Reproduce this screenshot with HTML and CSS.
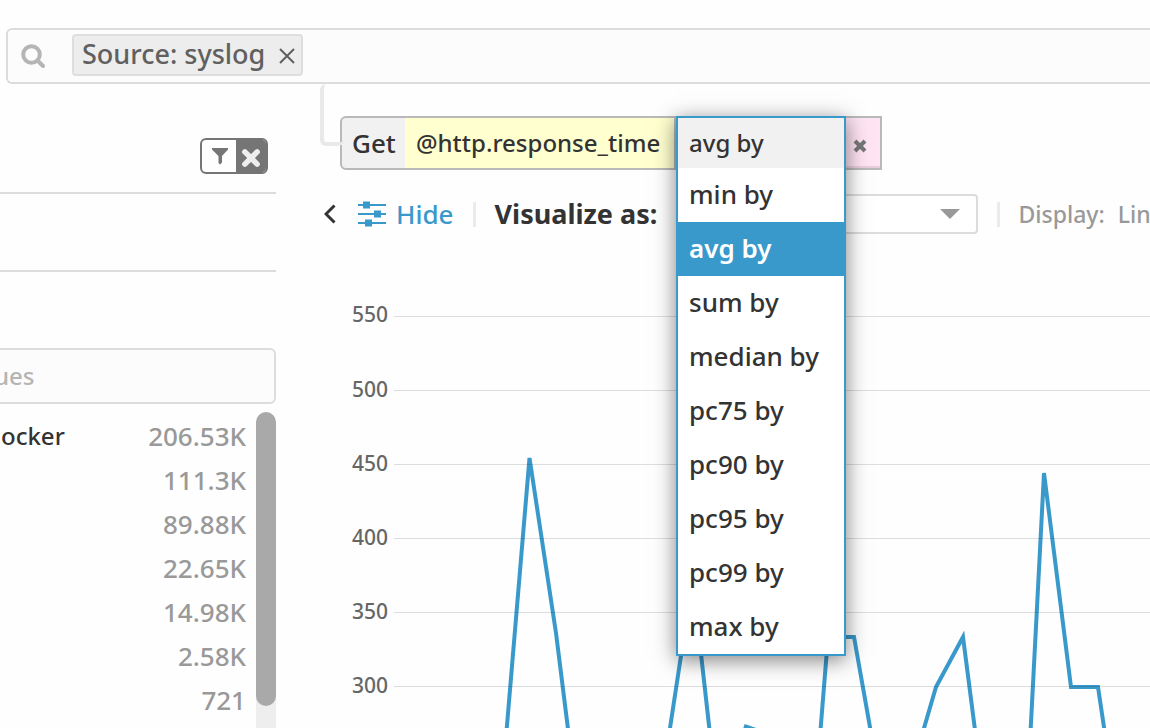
FILE: index.html
```html
<!DOCTYPE html>
<html lang="en">
<head>
<meta charset="utf-8">
<title>Log analytics</title>
<link rel="stylesheet" href="styles.css">
</head>
<body>
<div class="page">
  <header class="search">
    <svg class="search-icon" viewBox="0 0 24 24" aria-hidden="true"><circle cx="10.500" cy="10.500" r="8.300"/><path d="M16.500 16.500L22 22"/></svg>
    <div class="tag"><span>Source: syslog</span>
      <button class="tag-close" aria-label="Remove filter"><svg viewBox="0 0 16 16"><path d="M1 1L15 15M15 1L1 15"/></svg></button>
    </div>
    <input class="search-input" type="text" aria-label="Search logs">
  </header>
  <div class="columns">
    <aside class="sidebar">
      <div class="facet-head">
        <div class="toggle">
          <button class="toggle-filter" aria-label="Filter"><svg viewBox="0 0 18 18"><path d="M1 1H17V2.500L11 9V15.500L9 17.500L7.500 16V9L1 2.500Z"/></svg></button>
          <button class="toggle-clear" aria-label="Clear"><svg viewBox="0 0 18 18"><path d="M3.500 3.500L14.500 14.500M14.500 3.500L3.500 14.500"/></svg></button>
        </div>
      </div>
      <div class="facet-gap"></div>
      <input class="facet-search" type="text" placeholder="ues" aria-label="Filter values">
      <div class="facet-body">
        <ul class="values">
          <li><span class="name">ocker</span><span>206.53K</span></li>
          <li><span>111.3K</span></li>
          <li><span>89.88K</span></li>
          <li><span>22.65K</span></li>
          <li><span>14.98K</span></li>
          <li><span>2.58K</span></li>
          <li><span>721</span></li>
        </ul>
        <div class="scroll"><div class="thumb"></div></div>
      </div>
    </aside>
    <main class="main">
      <div class="query">
        <span class="get">Get</span>
        <button class="measure">@http.response_time</button>
        <div class="agg">
          <div class="menu">
            <button class="menu-head" aria-expanded="true">avg by</button>
            <ul class="options" role="listbox" aria-label="Aggregation">
              <li role="option">min by</li>
              <li role="option" class="selected" aria-selected="true">avg by</li>
              <li role="option">sum by</li>
              <li role="option">median by</li>
              <li role="option">pc75 by</li>
              <li role="option">pc90 by</li>
              <li role="option">pc95 by</li>
              <li role="option">pc99 by</li>
              <li role="option">max by</li>
            </ul>
          </div>
        </div>
        <button class="group" aria-label="Remove grouping"><svg viewBox="0 0 14 14"><path d="M2 2L12 12M12 2L2 12"/></svg></button>
      </div>
      <div class="toolbar">
        <button class="back" aria-label="Collapse"><svg viewBox="0 0 12 20"><path d="M10.500 1.500L2 10L10.500 18.500"/></svg></button>
        <button class="hide">
          <svg viewBox="0 0 28 26"><path class="rail" d="M0 4H28M0 13H28M0 22H28"/><path d="M5 .5h7v7h-7zM16 9.500h7v7h-7zM7 18.500h7v7h-7z"/></svg>
          <span>Hide</span>
        </button>
        <span class="divider"></span>
        <label class="visualize" for="viz">Visualize as:</label>
        <div class="select"><select id="viz"><option></option></select>
          <svg viewBox="0 0 20 10" aria-hidden="true"><path d="M0 0H20L10 10Z"/></svg></div>
        <span class="divider"></span>
        <span class="display">Display:</span><span class="display">Lin</span>
      </div>
      <svg class="chart" role="img" aria-label="Average response time">
        <g class="line"><path d="M184 487L209.500 184L236 359L252 487M345 487L364 362H379L393 487M424 452L436 456M498 487L508 363H534L556 487M602 461L616 413L643 363L659 487M709 487L724 199L751 413H778L788 480"/></g>
        <g class="grid"><path d="M74 42H2000M74 116H2000M74 190H2000M74 264H2000M74 338H2000M74 412H2000"/></g>
        <g class="ticks"><text x="68" y="48">550</text><text x="68" y="123">500</text><text x="68" y="197">450</text><text x="68" y="271">400</text><text x="68" y="345">350</text><text x="68" y="419">300</text></g>
      </svg>
    </main>
  </div>
</div>
</body>
</html>
```
FILE: styles.css
```css
* { box-sizing: border-box; }
html, body { height: 100%; }
body { margin: 0; overflow: hidden; background: #fefefe; color: #333; font: 500 26px/32px "Noto Sans", sans-serif; }
button, input, select { font: inherit; color: inherit; margin: 0; padding: 0; border: 0; background: none; border-radius: 0; }
button { cursor: pointer; }
ul { list-style: none; margin: 0; padding: 0; }
svg { display: block; flex: none; }

.page { display: flex; flex-direction: column; height: 100%; padding-top: 28px; }
.search { display: flex; align-items: center; flex: none; height: 56px; margin-left: 6px; padding-left: 13px; border: 2px solid #dcdcdc; border-right: 0; border-radius: 6px 0 0 6px; background: #fcfcfc; }
.search-icon { width: 24px; height: 24px; fill: none; stroke: #b5b5b5; stroke-width: 4; stroke-linecap: round; }
.tag { display: flex; align-items: center; gap: 14px; height: 42px; margin: 0 0 2px 27px; padding: 0 6px 2px 8px; border: 2px solid #dedede; border-radius: 4px; background: #ededed; color: #606060; font-size: 27px; white-space: nowrap; }
.tag-close svg { width: 16px; height: 16px; margin-top: 4px; fill: none; stroke: #606060; stroke-width: 2; }
.search-input { flex: 1; min-width: 0; height: 48px; }

.columns { display: flex; flex: 1; min-height: 0; }
.sidebar { display: flex; flex-direction: column; flex: none; width: 276px; color: #999; font-size: 24px; }
.facet-head { display: flex; justify-content: flex-end; flex: none; height: 110px; padding: 54px 8px 0 0; border-bottom: 2px solid #dcdcdc; }
.toggle { display: flex; width: 68px; height: 36px; border: 2px solid #757575; border-radius: 6px; overflow: hidden; }
.toggle button { display: flex; align-items: center; justify-content: center; }
.toggle-filter { width: 34px; padding-left: 2px; }
.toggle-filter svg { width: 18px; height: 18px; fill: #757575; }
.toggle .toggle-clear { flex: 1; padding-top: 3px; background: #757575; }
.toggle-clear svg { width: 20px; height: 20px; stroke: #eee; stroke-width: 5; stroke-linecap: round; }
.facet-gap { flex: none; height: 78px; border-bottom: 2px solid #dcdcdc; }
.facet-search { flex: none; height: 56px; margin: 76px 0 8px -8px; padding-bottom: 2px; border: 2px solid #dcdcdc; border-radius: 6px; background: #fcfcfc; }
.facet-search::placeholder { color: #b5b5b5; opacity: 1; }
.facet-body { display: flex; flex: 1; min-height: 0; overflow: hidden; }
.values { flex: 1; padding: 2px 10px 0 1px; }
.values li { display: flex; justify-content: flex-end; height: 44px; line-height: 44px; font-size: 26px; }
.values .name { margin-right: auto; color: #333; font-size: 24px; }
.scroll { width: 20px; background: linear-gradient(transparent 20px, #eee 20px); }
.thumb { height: 294px; border-radius: 10px; background: #a9a9a9; }

.main { display: flex; flex-direction: column; flex: 1; min-width: 0; margin-left: 44px; }
.query { position: relative; display: flex; flex: none; align-self: flex-start; height: 54px; margin: 32px 0 0 20px; border: 2px solid #b9b9b9; border-radius: 6px 0 0 6px; background: #f1f1f1; white-space: nowrap; }
.query::before { content: ""; position: absolute; left: -22px; top: -34px; width: 20px; height: 58px; border: solid #e9e9e9; border-width: 0 0 4px 4px; border-radius: 6px; }
.get { width: 63px; padding-left: 10px; line-height: 50px; }
.measure { width: 271px; padding-left: 11px; border-right: 2px solid #b9b9b9; background: #ffffcf; font-size: 24px; text-align: left; }
.agg { position: relative; width: 169px; }
.menu { position: absolute; z-index: 2; top: -2px; left: 0; width: 170px; border: 2px solid #3999cb; background: #fff; box-shadow: 0 4px 20px rgba(0, 0, 0, .5); }
.menu-head { display: block; width: 100%; height: 50px; padding-left: 11px; background: #f1f1f1; text-align: left; font-size: 24px; }
.options li { height: 54px; padding-left: 11px; line-height: 52px; }
.options .selected { background: #3999cb; color: #fff; font-weight: 600; }
.group { display: flex; align-items: center; justify-content: center; width: 35px; padding: 6px 6px 0 0; background: #ffe4f3; box-shadow: inset 0 -2px #e8cedd; }
.group svg { width: 14px; height: 14px; stroke: #777; stroke-width: 4; }

.toolbar { display: flex; align-items: center; flex: none; height: 40px; margin-top: 24px; padding-left: 4px; white-space: nowrap; overflow: hidden; }
.back svg { width: 12px; height: 20px; fill: none; stroke: #333; stroke-width: 3; }
.hide { display: flex; align-items: center; gap: 10px; margin-left: 22px; color: #3999cb; }
.hide svg { width: 28px; height: 26px; fill: #3999cb; }
.rail { stroke: #3999cb; stroke-width: 2; }
.divider { flex: none; width: 3px; height: 25px; margin: 0 19px; background: #ebebeb; }
.visualize { flex: none; width: 170px; font-size: 27px; font-weight: 700; }
.select { position: relative; flex: none; width: 300px; margin-left: 13px; }
.select select { display: block; width: 100%; height: 40px; border: 2px solid #dcdcdc; border-radius: 4px; background: #fff; appearance: none; }
.select svg { position: absolute; right: 18px; top: 15px; width: 20px; height: 10px; fill: #999; pointer-events: none; }
.display { margin-right: 13px; color: #999; font-size: 23px; }
.chart { flex: 1; width: 100%; min-height: 0; margin-top: 40px; overflow: hidden; }
.line { fill: none; stroke: #3999cb; stroke-width: 4; }
.grid { fill: none; stroke: #000; stroke-opacity: .13; stroke-width: 1; shape-rendering: crispEdges; }
.ticks { fill: #666; font-size: 21px; text-anchor: end; }
```
